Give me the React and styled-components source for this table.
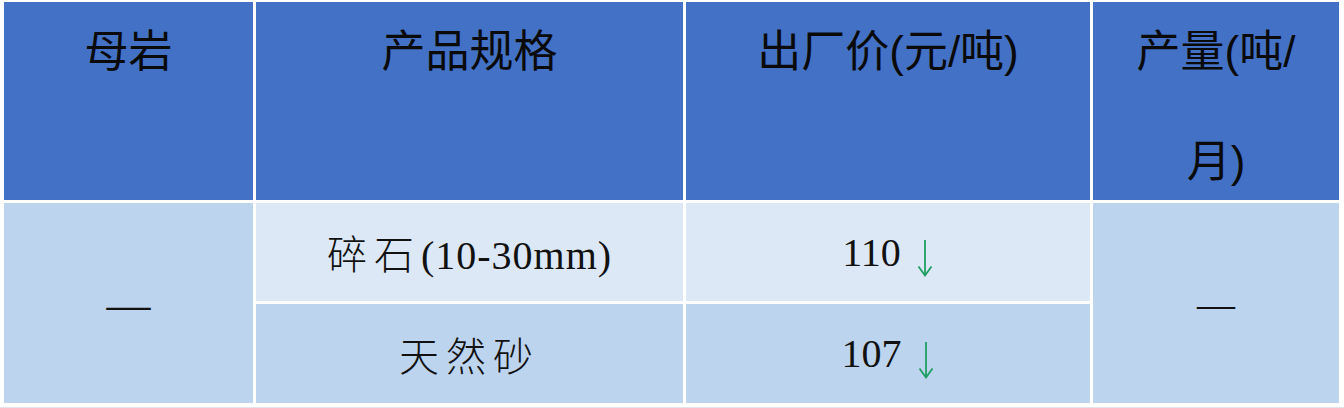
import { Fragment } from "react";
import styled, { createGlobalStyle } from "styled-components";

const GlobalStyle = createGlobalStyle`
    html, body {
        margin: 0;
        padding: 0;
        background: #ffffff;
    }
    * {
        box-sizing: border-box;
    }
`

const Table = styled.div`
    width: 1344px;
    height: 408px;
    display: grid;
    grid-template-columns: 249px 427px 404px 246px;
    grid-template-rows: 198px 98px 99px;
    column-gap: 3px;
    row-gap: 3px;
    padding: 2px 5px 5px 4px;
    background: #ffffff;
    border-bottom: 1px solid #e1e4e8;
`

const HeadCell = styled.div`
    background: #4371c5;
    color: #0a0a0a;
    font-family: "Noto Sans CJK SC", "Liberation Sans", sans-serif;
    font-size: 44px;
    font-weight: 400;
    text-align: center;
    line-height: 107px;
    padding: 0 12px;
    overflow: hidden;
`

const HeadLabel = styled.div`
    margin-top: -7px;
`

const Paren = styled.span`
    font-family: "Liberation Sans", sans-serif;
    font-weight: 400;
`

const BodyCell = styled.div`
    background: ${props => props.$light ? "#dce8f6" : "#bdd4ee"};
    grid-column: ${props => props.$col};
    grid-row: ${props => props.$rows};
    display: flex;
    align-items: center;
    justify-content: center;
    color: #111111;
    font-family: "Liberation Serif", "Noto Sans CJK SC", serif;
    font-size: 40px;
    font-weight: 300;
`

const Spec = styled.span`
    letter-spacing: 1px;
`

const Han = styled.span`
    font-family: "Noto Sans CJK SC", serif;
    font-weight: 300;
    letter-spacing: 7px;
`

const Dash = styled.span`
    font-family: "Liberation Serif", serif;
    font-size: ${props => props.$size || 44}px;
    font-weight: 400;
    margin-top: 2px;
`

const Price = styled.span`
    font-weight: 400;
`

const DownArrow = styled.svg`
    width: 18px;
    height: 38px;
    margin-left: 15px;
    margin-top: 12px;
    flex: none;
`

function Arrow() {
    return (
        <DownArrow viewBox="0 0 18 38">
            <path d="M9 1 V36" stroke="#1f9f62" strokeWidth="1.8" fill="none" />
            <path d="M2.5 27.5 L9 36.5 L15.5 27.5" stroke="#1f9f62" strokeWidth="1.8" fill="none" strokeLinejoin="miter" />
        </DownArrow>
    );
}

const rows = [
    { name: "碎石", spec: "(10-30mm)", price: "110", light: true },
    { name: "天然砂", spec: "", price: "107", light: false },
];

export default function App() {
    return (
        <>
            <GlobalStyle />
            <Table>
                <HeadCell><HeadLabel>母岩</HeadLabel></HeadCell>
                <HeadCell><HeadLabel>产品规格</HeadLabel></HeadCell>
                <HeadCell>
                    <HeadLabel>出厂价<Paren>(</Paren>元<Paren>/</Paren>吨<Paren>)</Paren></HeadLabel>
                </HeadCell>
                <HeadCell>
                    <HeadLabel>产量<Paren>(</Paren>吨<Paren>/</Paren><br />月<Paren>)</Paren></HeadLabel>
                </HeadCell>

                <BodyCell $col="1" $rows="2 / 4"><Dash>—</Dash></BodyCell>
                <BodyCell $col="4" $rows="2 / 4"><Dash $size={38}>—</Dash></BodyCell>

                {rows.map((row, i) => (
                    <Fragment key={row.name}>
                        <BodyCell $col="2" $rows={String(i + 2)} $light={row.light}>
                            <Spec><Han>{row.name}</Han>{row.spec}</Spec>
                        </BodyCell>
                        <BodyCell $col="3" $rows={String(i + 2)} $light={row.light}>
                            <Price>{row.price}</Price>
                            <Arrow />
                        </BodyCell>
                    </Fragment>
                ))}
            </Table>
        </>
    );
}
